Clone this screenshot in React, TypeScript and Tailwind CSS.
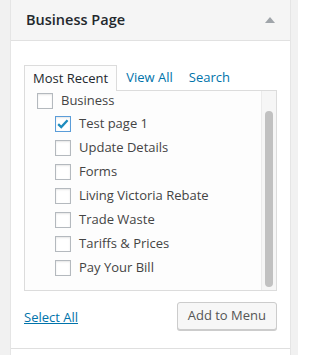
import React from 'react';

const pages = [
  { label: 'Test page 1', checked: true },
  { label: 'Update Details' },
  { label: 'Forms' },
  { label: 'Living Victoria Rebate' },
  { label: 'Trade Waste' },
  { label: 'Tariffs & Prices' },
  { label: 'Pay Your Bill' },
];

const Checkbox: React.FC<{ checked?: boolean }> = ({ checked }) => (
  <span
    className={`flex h-[16px] w-[16px] shrink-0 items-center justify-center border bg-white shadow-[inset_0_1px_2px_rgba(0,0,0,0.1)] ${
      checked ? 'border-[#5b9dd9] shadow-[0_0_2px_rgba(30,140,190,0.8)]' : 'border-[#b4b9be]'
    }`}
  >
    {checked && (
      <svg viewBox="0 0 16 16" className="h-[14px] w-[14px]">
        <path d="M2.5 8.2 L6 11.5 L13.2 3.6" fill="none" stroke="#1e8cbe" strokeWidth={2.6} />
      </svg>
    )}
  </span>
);

const App: React.FC = () => {
  return (
    <div className="min-h-[355px] w-[298px] bg-[#f1f1f1] pl-[10px] pr-[7px] font-['Open_Sans',sans-serif]">
      <div className="border-x border-[#e5e5e5]">
        <div className="flex h-[41px] items-center justify-between border-b border-[#e1e1e1] bg-[#f5f5f5] pl-[15px] pr-[15px]">
          <h3 className="text-[14.5px] font-semibold text-[#23282d]">Business Page</h3>
          <svg viewBox="0 0 10 6" className="h-[6px] w-[10px]">
            <path d="M0 6 L5 0 L10 6 Z" fill="#a0a5aa" />
          </svg>
        </div>

        <div className="border-b border-[#dfdfdf] bg-white px-[13px] pb-[18px] pt-[24px]">
          <div className="flex h-[25px] items-stretch text-[13px]">
            <span className="relative z-10 -mb-px flex items-center border border-b-0 border-[#dcdcdc] bg-[#fdfdfd] px-[8px] text-[#23282d]">
              Most Recent
            </span>
            <span className="flex items-center pl-[9px] text-[#0073aa]">View All</span>
            <span className="flex items-center pl-[16px] text-[#0073aa]">Search</span>
          </div>

          <div className="flex h-[201px] border border-[#dcdcdc] bg-[#fdfdfd]">
            <ul className="flex-1 pl-[12px] text-[13px] text-[#444]">
              <li className="flex h-[18px] items-center gap-[8px] pt-[1px]">
                <Checkbox />
                <span>Business</span>
              </li>
              <li>
                <ul className="pl-[18px] pt-[3px]">
                  {pages.map((p) => (
                    <li key={p.label} className="flex h-[24px] items-center gap-[8px]">
                      <Checkbox checked={p.checked} />
                      <span>{p.label}</span>
                    </li>
                  ))}
                </ul>
              </li>
            </ul>
            <div className="flex w-[15px] justify-center border-l border-[#ebebeb] bg-[#f6f6f6] pb-[3px] pt-[20px]">
              <div className="w-[8px] rounded-full bg-[#c1c1c1]" />
            </div>
          </div>

          <div className="mt-[11px] flex items-center justify-between">
            <a href="#" className="pt-[3px] text-[13px] text-[#0073aa] underline">Select All</a>
            <button className="h-[28px] rounded-[3px] border border-[#cccccc] bg-[#f7f7f7] px-[10px] text-[13px] text-[#555] shadow-[0_1px_0_#cccccc]">
              Add to Menu
            </button>
          </div>
        </div>
        <div className="h-[6px] bg-white" />
      </div>
    </div>
  );
};

export default App;
